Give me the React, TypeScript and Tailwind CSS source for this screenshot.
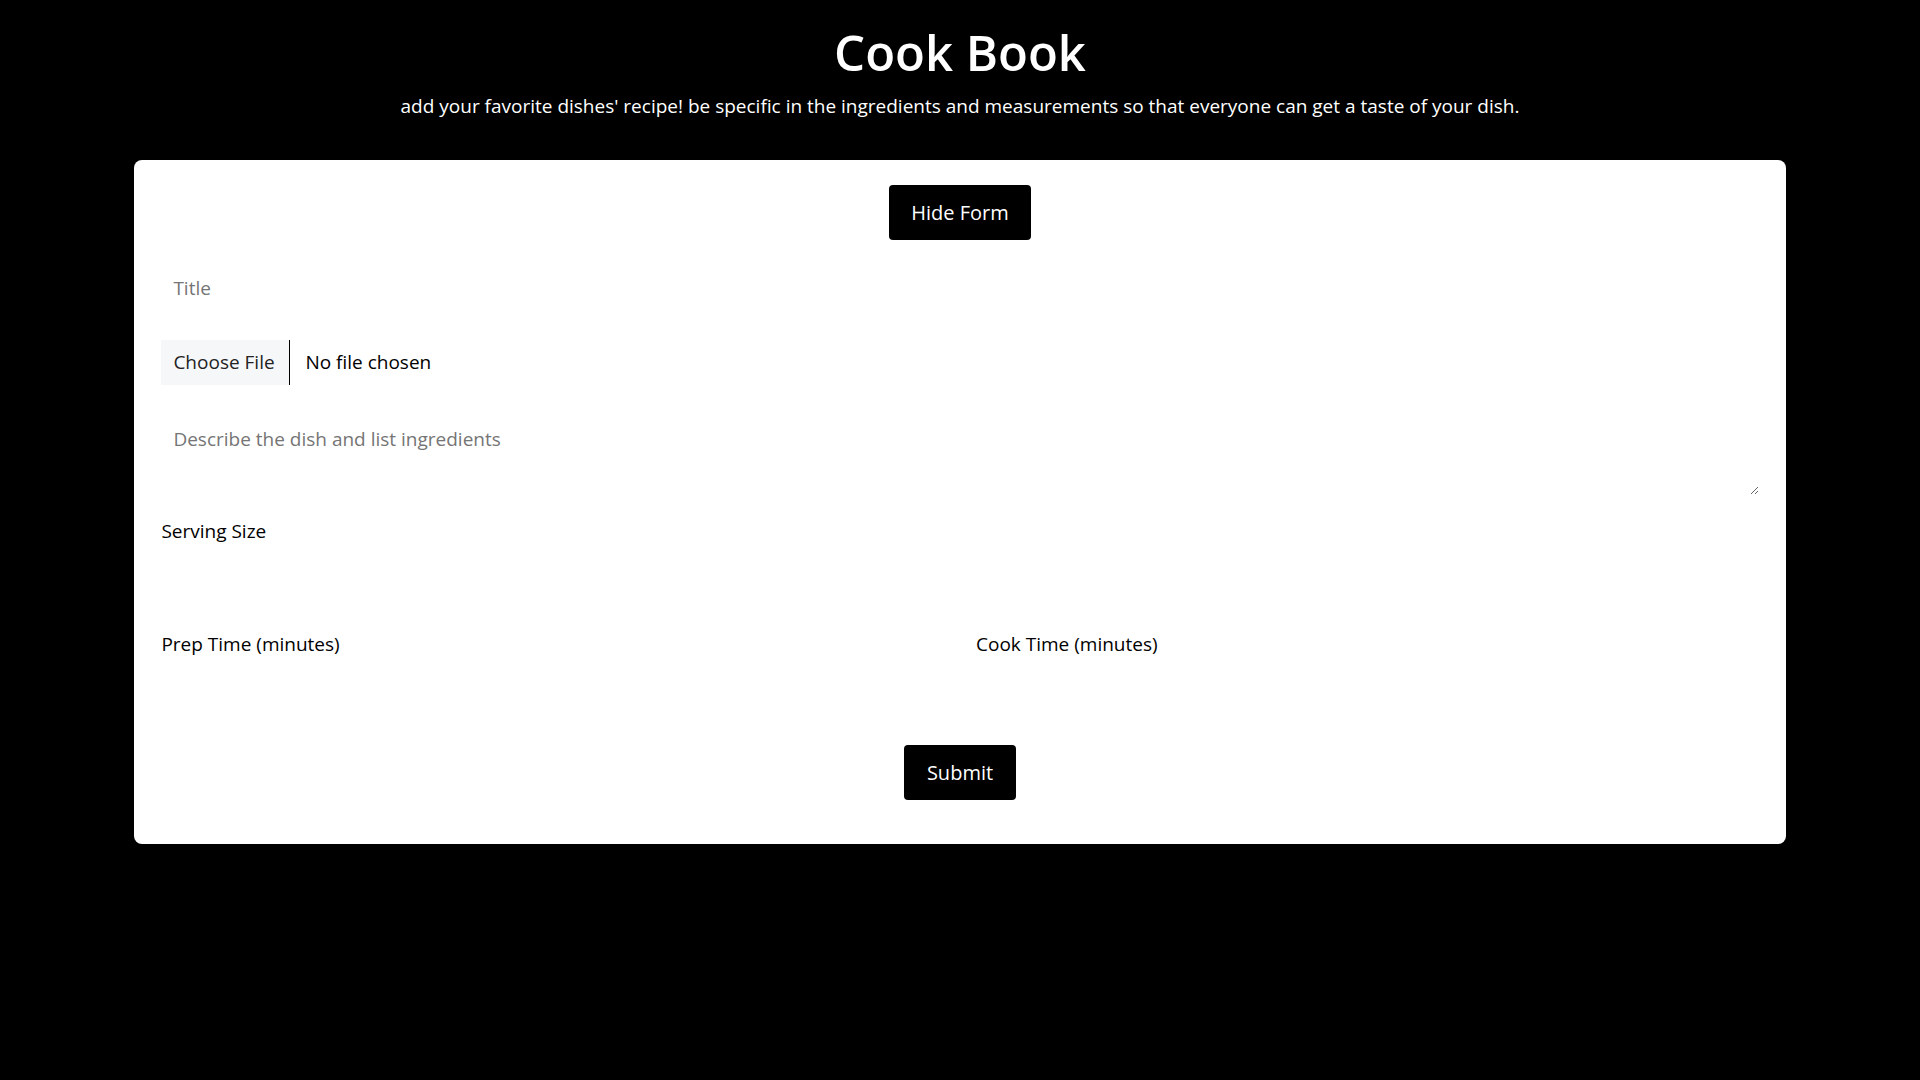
import { useState } from "react";

const CookBook = () => {
  const [showForm, setShowForm] = useState(true);

  return (
    <div className="min-h-screen w-full bg-black font-['Open_Sans',sans-serif] text-[20px]">
      <header className="flex flex-col items-center pt-[15px] text-white">
        <h1 className="text-[49px] leading-[74px] font-semibold">Cook Book</h1>
        <p className="mt-[3px] text-[19px] leading-[28px]">
          add your favorite dishes' recipe! be specific in the ingredients and measurements so that everyone can get a taste of your dish.
        </p>
      </header>

      <div className="mx-auto mt-[40px] w-[86%] rounded-lg bg-white px-[27px] pt-[25px] pb-[44px]">
        <div className="flex justify-center">
          <button
            onClick={() => setShowForm(!showForm)}
            className="h-[55px] w-[142px] rounded-[4px] bg-black text-[20px] text-white"
          >
            {showForm ? "Hide Form" : "Show Form"}
          </button>
        </div>

        {showForm && (
          <form className="flex flex-col" onSubmit={(e) => e.preventDefault()}>
            <input
              type="text"
              placeholder="Title"
              className="mt-[20px] h-[55px] w-full px-[12px] text-[19px] text-black outline-none placeholder:text-[#757575]"
            />

            <div className="mt-[25px] flex h-[45px] items-center">
              <label className="flex h-full cursor-pointer items-center">
                <span className="flex h-full w-[129px] items-center border-r border-black bg-[#f6f7f9] px-[12px] text-[19px] text-[#222]">
                  Choose File
                </span>
                <input type="file" className="hidden" />
                <span className="ml-[15px] text-[19px] text-black">No file chosen</span>
              </label>
            </div>

            <textarea
              placeholder="Describe the dish and list ingredients"
              className="mt-[27px] h-[83px] w-full px-[12px] py-[13px] text-[19px] outline-none placeholder:text-[#757575]"
            />

            <label className="mt-[23px] text-[19px] leading-[27px] text-black">Serving Size</label>
            <input type="number" className="h-[55px] w-full px-[12px] text-[19px] outline-none" />

            <div className="mt-[31px] grid grid-cols-2 gap-[32px]">
              <div className="flex flex-col">
                <label className="text-[19px] leading-[27px] text-black">Prep Time (minutes)</label>
                <input type="number" className="h-[55px] w-full px-[12px] text-[19px] outline-none" />
              </div>
              <div className="flex flex-col">
                <label className="text-[19px] leading-[27px] text-black">Cook Time (minutes)</label>
                <input type="number" className="h-[55px] w-full px-[12px] text-[19px] outline-none" />
              </div>
            </div>

            <div className="mt-[32px] flex justify-center">
              <button type="submit" className="h-[55px] w-[112px] rounded-[4px] bg-black text-[20px] text-white">
                Submit
              </button>
            </div>
          </form>
        )}
      </div>
    </div>
  );
};

export default function App() {
  return <CookBook />;
}
